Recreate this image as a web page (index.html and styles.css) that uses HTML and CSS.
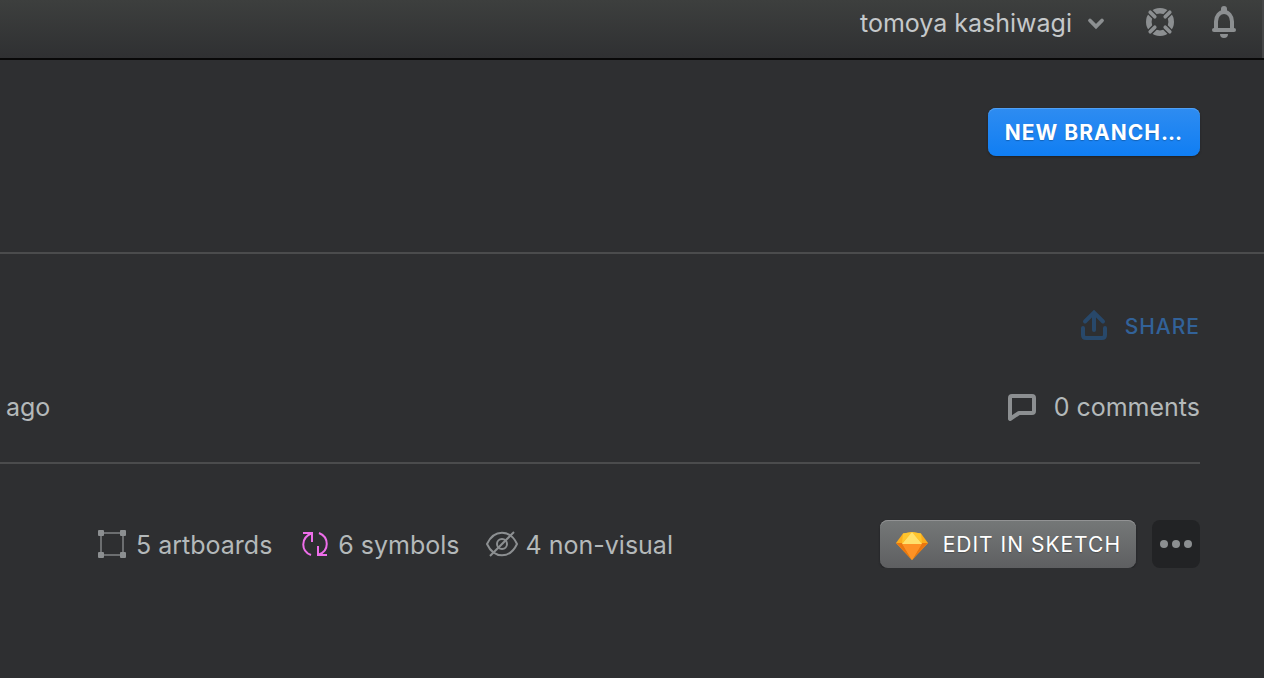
FILE: index.html
```html
<!DOCTYPE html>
<html lang="en">
<head>
<meta charset="utf-8">
<meta name="viewport" content="width=device-width, initial-scale=1">
<title>Branch</title>
<link rel="stylesheet" href="styles.css">
</head>
<body>
<header class="topbar">
  <button class="account" type="button">
    <span>tomoya kashiwagi</span>
    <svg class="chevron" width="16" height="12" viewBox="0 0 16 12" aria-hidden="true"><path d="M2 3.500L8 9.500L14 3.500" fill="none" stroke="currentColor" stroke-width="3.8" stroke-linecap="round"/></svg>
  </button>
  <button class="icon-button" type="button" aria-label="Help">
    <svg width="28" height="28" viewBox="0 0 28 28" aria-hidden="true">
      <defs><mask id="ring-cuts" maskUnits="userSpaceOnUse" x="0" y="0" width="28" height="28"><rect width="28" height="28" fill="#fff"/><path d="M0 0L28 28M28 0L0 28" stroke="#000" stroke-width="6.4"/></mask></defs>
      <g mask="url(#ring-cuts)"><circle cx="14" cy="14" r="11.2" fill="none" stroke="currentColor" stroke-width="5.6"/></g>
      <path d="M4.200 4.200L8.800 8.800M23.800 4.200L19.200 8.800M4.200 23.800L8.800 19.200M23.800 23.800L19.200 19.200" stroke="currentColor" stroke-width="3.6" stroke-linecap="round"/>
    </svg>
  </button>
  <button class="icon-button" type="button" aria-label="Notifications">
    <svg width="24" height="32" viewBox="0 0 24 32" aria-hidden="true">
      <path d="M4 24V15.500C4 10 7.500 6 12 6S20 10 20 15.500V24" fill="none" stroke="currentColor" stroke-width="4"/>
      <path d="M2 24H22" stroke="currentColor" stroke-width="4" stroke-linecap="round"/>
      <path d="M9 6V3a3 3 0 0 1 6 0V6zM8 28h8a4 4 0 0 1-8 0z" fill="currentColor"/>
    </svg>
  </button>
</header>
<main>
  <section class="branch-bar">
    <button class="button button-primary" type="button">NEW BRANCH…</button>
  </section>
  <section class="commit">
    <div class="share-row">
      <button class="share" type="button">
        <svg width="26" height="32" viewBox="0 0 26 32" aria-hidden="true"><path d="M2 18V25Q2 28 5 28H21Q24 28 24 25V18M13 20V3M4 11.500L13 2.500L22 11.500" fill="none" stroke="currentColor" stroke-width="4" stroke-linecap="round"/></svg>
        <span class="share-label">SHARE</span>
      </button>
    </div>
    <div class="meta">
      <span>ago</span>
      <span class="comments">
        <svg width="28" height="28" viewBox="0 0 28 28" aria-hidden="true"><path d="M4 3H24Q26 3 26 5V18Q26 20 24 20H11L2 26V5Q2 3 4 3Z" fill="none" stroke="currentColor" stroke-width="4" stroke-linejoin="round"/></svg>
        <span>0 comments</span>
      </span>
    </div>
    <div class="summary">
      <ul class="counts">
        <li class="count">
          <svg class="grey" width="32" height="28" viewBox="-2 0 32 28" aria-hidden="true"><rect x="3" y="3" width="22" height="22" fill="none" stroke="#6c6e70" stroke-width="2"/><path d="M0 1q0-1 1-1h4q1 0 1 1v4q0 1-1 1H1q-1 0-1-1zM22 1q0-1 1-1h4q1 0 1 1v4q0 1-1 1h-4q-1 0-1-1zM0 23q0-1 1-1h4q1 0 1 1v4q0 1-1 1H1q-1 0-1-1zM22 23q0-1 1-1h4q1 0 1 1v4q0 1-1 1h-4q-1 0-1-1z" fill="currentColor"/></svg>
          <span>5 artboards</span>
        </li>
        <li class="count">
          <svg class="pink" width="32" height="26" viewBox="-4 0 32 26" aria-hidden="true"><path d="M1 2H10V11M10 2C-2 7 -1 20 9 24M25 24H16V15M16 24C28 20 27 6 17 2" fill="none" stroke="currentColor" stroke-width="2"/></svg>
          <span>6 symbols</span>
        </li>
        <li class="count">
          <svg class="grey" width="32" height="28" viewBox="0 0 32 28" aria-hidden="true"><path d="M1 14C8 -1 24 -1 31 14C24 29 8 29 1 14Z" fill="none" stroke="currentColor" stroke-width="2" stroke-linejoin="round"/><circle cx="16" cy="14" r="5" fill="none" stroke="currentColor" stroke-width="2"/><path d="M4 26L28 2" stroke="currentColor" stroke-width="2"/></svg>
          <span>4 non-visual</span>
        </li>
      </ul>
      <div class="actions">
        <button class="button button-sketch" type="button">
          <svg width="32" height="28" viewBox="-1 -1 32 28" aria-hidden="true">
            <path d="M7 1.500L16 0L25 1.500L32 11L16 28L0 11Z" fill="#fbac1c"/>
            <path d="M0 11H6L16 28Z" fill="#e97610"/><path d="M32 11H26L16 28Z" fill="#e97610"/>
            <path d="M6 11.500H26L16 28Z" fill="#fe9225"/>
            <path d="M7 1.500L6 11.500L16 0L26 11.500L25 1.500L16 0Z" fill="#fec52d"/>
            <path d="M16 0L26 12H6Z" fill="#ffe06b"/>
          </svg>
          <span>EDIT IN SKETCH</span>
        </button>
        <button class="more" type="button" aria-label="More">
          <svg width="32" height="8" viewBox="0 0 32 8" aria-hidden="true"><g fill="currentColor"><circle cx="4" cy="4" r="4"/><circle cx="16" cy="4" r="4"/><circle cx="28" cy="4" r="4"/></g></svg>
        </button>
      </div>
    </div>
  </section>
</main>
</body>
</html>
```
FILE: styles.css
```css
* { box-sizing: border-box; }
body {
  margin: 0;
  background: #2e2f31;
  color: #b4b9ba;
  font: 400 25px/32px Inter, "Liberation Sans", sans-serif;
}
button {
  margin: 0;
  padding: 0;
  border: 0;
  background: none;
  color: inherit;
  font: inherit;
}
svg { display: block; flex: none; overflow: visible; }
.topbar {
  display: flex;
  align-items: center;
  justify-content: flex-end;
  gap: 38px;
  height: 60px;
  padding: 0 28px 14px 0;
  border-bottom: 2px solid #080808;
  background: linear-gradient(#3d3f3e, #2f3032);
  box-shadow: inset -2px 0 #454647;
  color: #8c8f91;
}
.account {
  display: flex;
  align-items: center;
  gap: 16px;
  padding-top: 2px;
  color: #c5c8ca;
}
.chevron { margin-right: 4px; color: #8c8f91; }
.branch-bar {
  display: flex;
  justify-content: flex-end;
  padding: 48px 64px 96px;
  border-bottom: 2px solid #4b4c4d;
}
.button {
  display: flex;
  align-items: center;
  justify-content: center;
  height: 48px;
  padding: 2px 16px 0;
  border-radius: 8px;
  color: #fff;
  font-size: 21px;
  letter-spacing: 1px;
  text-shadow: 0 1px 1px rgba(0, 0, 0, .25);
}
.button-primary {
  padding: 2px 17px 0;
  background: linear-gradient(#2e8cf1, #107ef3);
  box-shadow: inset 0 1px #50a0f5, 0 1px 2px #202123;
  font-weight: 700;
}
.commit { padding: 56px 64px 0 0; }
.share-row { display: flex; justify-content: flex-end; }
.share {
  display: flex;
  align-items: center;
  gap: 18px;
  color: #28486a;
  font-size: 21px;
  font-weight: 500;
  letter-spacing: 1px;
}
.share-label {
  padding-top: 2px;
  color: #326299;
  line-height: 30px;
}
.meta {
  display: flex;
  align-items: center;
  justify-content: space-between;
  padding: 49px 0 39px 6px;
  border-bottom: 2px solid #4b4c4d;
}
.comments { display: flex; align-items: center; gap: 18px; }
.comments svg, .grey { color: #8c8f91; }
.pink { color: #ee6eea; }
.summary {
  display: flex;
  align-items: center;
  justify-content: space-between;
  padding: 56px 0 0 96px;
}
.counts {
  display: flex;
  gap: 26px;
  margin: 0;
  padding: 0;
  list-style: none;
}
.count { display: flex; align-items: center; gap: 8px; }
.count span { padding-top: 2px; }
.actions { display: flex; gap: 16px; }
.button-sketch {
  gap: 16px;
  padding: 2px 15px 0;
  background: linear-gradient(#757878, #5e5f61);
  box-shadow: inset 0 1px #929394, 0 1px 2px #1d1e20;
}
.more {
  display: grid;
  place-items: center;
  width: 48px;
  height: 48px;
  border-radius: 8px;
  background: #222325;
  color: #8c8f91;
}
```
